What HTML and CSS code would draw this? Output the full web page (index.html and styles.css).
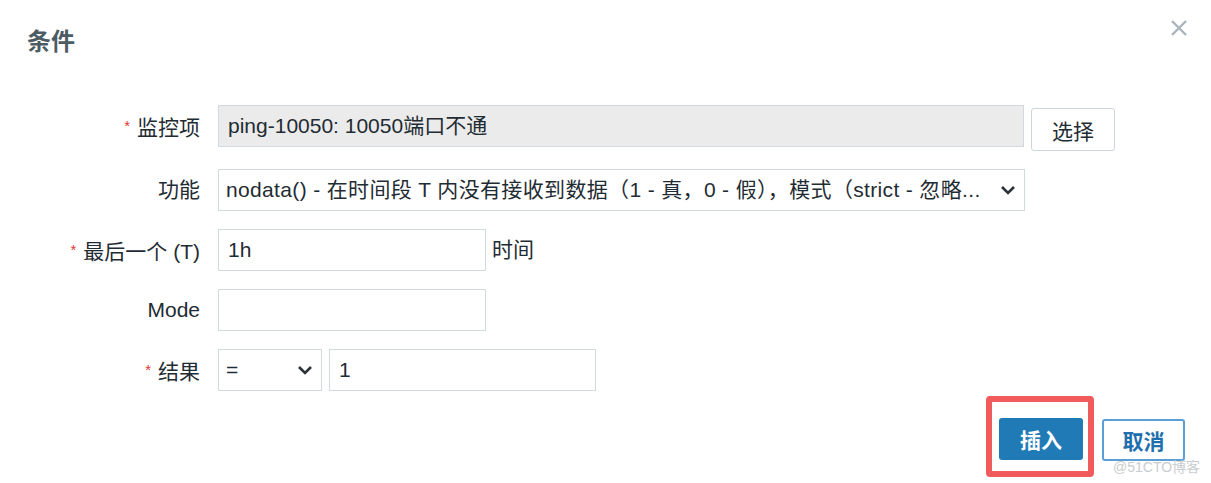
FILE: index.html
```html
<!DOCTYPE html>
<html lang="zh">
<head>
<meta charset="utf-8">
<title>条件</title>
<link rel="stylesheet" href="styles.css">
</head>
<body>
<div class="dialog">
  <div class="header">
    <h2 class="title">条件</h2>
    <button class="close" aria-label="关闭">
      <svg width="18" height="18" viewBox="0 0 18 18"><path d="M2 2 L16 16 M16 2 L2 16" stroke="#a9b5bd" stroke-width="2.4" stroke-linecap="butt" fill="none"/></svg>
    </button>
  </div>
  <div class="form">
    <div class="row row-first">
      <label class="label"><span class="req">*</span>监控项</label>
      <div class="field">
        <div class="input readonly w-wide">ping-10050: 10050端口不通</div>
        <button class="btn-alt">选择</button>
      </div>
    </div>
    <div class="row">
      <label class="label">功能</label>
      <div class="field">
        <div class="select w-select">
          <span class="select-text wide-text">nodata() - 在时间段 T 内没有接收到数据（1 - 真，0 - 假），模式（strict - 忽略...</span>
          <svg class="chev" width="16" height="10" viewBox="0 0 16 10"><path d="M2 2 L8 8 L14 2" stroke="#2b3338" stroke-width="2.6" fill="none"/></svg>
        </div>
      </div>
    </div>
    <div class="row">
      <label class="label"><span class="req">*</span>最后一个 (T)</label>
      <div class="field">
        <div class="input w-mid">1h</div>
        <span class="suffix">时间</span>
      </div>
    </div>
    <div class="row">
      <label class="label">Mode</label>
      <div class="field">
        <div class="input w-mid"></div>
      </div>
    </div>
    <div class="row">
      <label class="label"><span class="req">*</span>结果</label>
      <div class="field">
        <div class="select w-op">
          <span class="select-text">=</span>
          <svg class="chev" width="16" height="10" viewBox="0 0 16 10"><path d="M2 2 L8 8 L14 2" stroke="#2b3338" stroke-width="2.6" fill="none"/></svg>
        </div>
        <div class="input w-val">1</div>
      </div>
    </div>
  </div>
  <div class="footer">
    <div class="highlight">
      <button class="btn-primary">插入</button>
    </div>
    <button class="btn-secondary">取消</button>
  </div>
  <div class="watermark">@51CTO博客</div>
</div>
</body>
</html>
```

FILE: styles.css
```css
* { box-sizing: border-box; }
html, body { margin: 0; padding: 0; background: #ffffff; }
body {
  font-family: "Liberation Sans", Arial, "Noto Sans CJK SC", sans-serif;
  color: #1f2c33;
  font-size: 21px;
}
.dialog {
  position: relative;
  width: 1211px;
  height: 483px;
  overflow: hidden;
}
.header {
  height: 105px;
  display: flex;
  justify-content: space-between;
  align-items: flex-start;
  padding: 26px 22px 0 27px;
}
.title {
  margin: 0;
  font-size: 24px;
  line-height: 32px;
  font-weight: bold;
  color: #4d5b64;
}
.close {
  border: 0;
  background: none;
  padding: 0;
  margin-top: -8px;
  width: 20px;
  height: 20px;
  display: flex;
  align-items: center;
  justify-content: center;
}
.form {
  display: flex;
  flex-direction: column;
  gap: 18px;
}
.row {
  display: grid;
  grid-template-columns: 200px 1fr;
  column-gap: 18px;
  align-items: start;
}
.row-first { height: 46px; }
.label {
  text-align: right;
  height: 42px;
  line-height: 42px;
  white-space: nowrap;
}
.req {
  color: #e33734;
  font-size: 15px;
  vertical-align: 4px;
  margin-right: 7px;
}
.field {
  display: flex;
  align-items: flex-start;
  gap: 7px;
}
.input, .select {
  height: 42px;
  border: 1px solid #d3dadf;
  background: #ffffff;
  padding: 0 9px;
  line-height: 40px;
  white-space: nowrap;
  overflow: hidden;
}
.readonly { background: #ebebeb; }
.w-wide { width: 806px; }
.w-select { width: 807px; }
.w-mid { width: 268px; }
.w-op { width: 104px; }
.w-val { width: 267px; }
.select {
  display: flex;
  align-items: center;
  justify-content: space-between;
  padding: 0 8px 0 7px;
}
.select-text {
  overflow: hidden;
  white-space: nowrap;
}
.wide-text { letter-spacing: 0.35px; }
.chev { flex: none; margin-left: 10px; }
.suffix {
  line-height: 42px;
  margin-left: -1px;
}
.btn-alt {
  margin-top: 3px;
  width: 84px;
  height: 43px;
  border: 1px solid #cdd5da;
  border-radius: 3px;
  background: #ffffff;
  color: #1f2c33;
  font: inherit;
  font-size: 21px;
}
.footer {
  display: flex;
  justify-content: flex-end;
  align-items: flex-start;
  gap: 8px;
  padding: 5px 26px 0 0;
}
.highlight {
  border: 6px solid #f25b5b;
  border-radius: 4px;
  padding: 16px 5px 11px 7px;
}
.btn-primary {
  display: block;
  width: 84px;
  height: 42px;
  border: 0;
  border-radius: 3px;
  background: #1f7ab6;
  color: #ffffff;
  font: inherit;
  font-size: 21px;
  font-weight: bold;
}
.btn-secondary {
  margin-top: 23px;
  width: 83px;
  height: 42px;
  border: 2px solid #5b9fd4;
  border-radius: 3px;
  background: #ffffff;
  color: #1f6fae;
  font: inherit;
  font-size: 21px;
  font-weight: bold;
}
.watermark {
  position: absolute;
  left: 1113px;
  top: 456px;
  font-size: 14px;
  color: #c9cdd0;
  white-space: nowrap;
}
```
